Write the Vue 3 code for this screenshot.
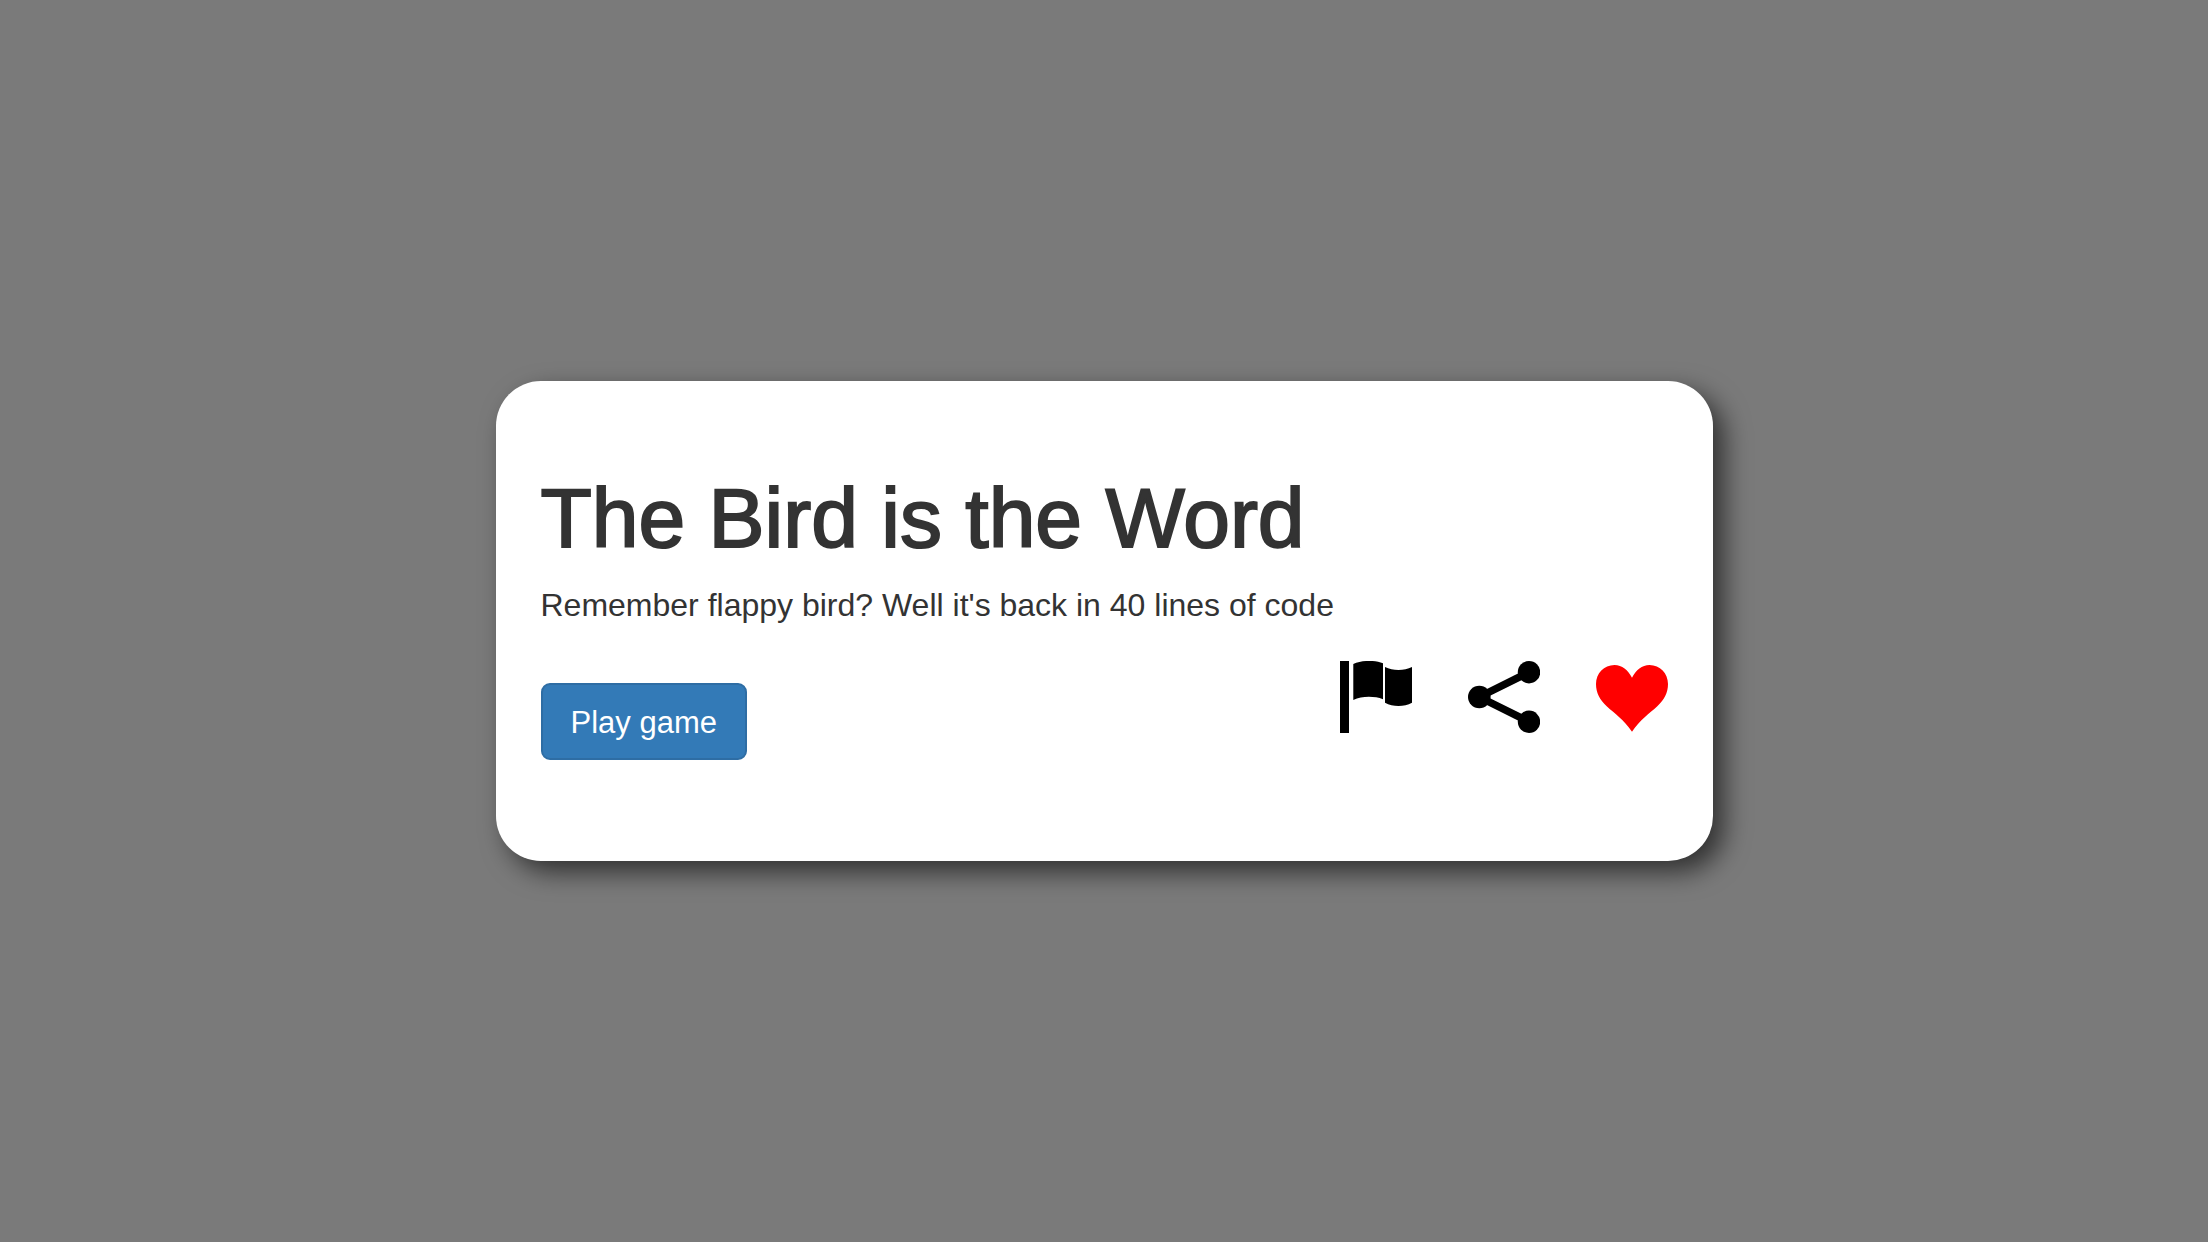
<script setup>
const title = 'The Bird is the Word'
const summary = "Remember flappy bird? Well it's back in 40 lines of code"
</script>

<template>
  <main class="page">
    <article class="card">
      <h1 class="title">{{ title }}</h1>
      <p class="summary">{{ summary }}</p>
      <div class="actions">
        <button type="button" class="play">Play game</button>
        <div class="icons">
          <button type="button" class="icon" aria-label="Flag">
            <svg viewBox="0 0 72 72" aria-hidden="true">
              <path d="M0 0H9V72H0Z" />
              <path d="M13.3 3C22 -1 35 -1 43 2.2V38.2C34 34.9 22 34.9 13.3 39Z" />
              <path d="M45 6C53 10 64 10 72 6V41.7C64 46.1 53 46.1 45 41.7Z" />
            </svg>
          </button>
          <button type="button" class="icon" aria-label="Share">
            <svg viewBox="0 0 72 72" aria-hidden="true">
              <path d="M61 11.2L11.3 36L61 60.8" fill="none" stroke="currentColor" stroke-width="7.5" />
              <circle cx="11.3" cy="36" r="11.3" />
              <circle cx="61" cy="11.2" r="11.2" />
              <circle cx="61" cy="60.8" r="11.2" />
            </svg>
          </button>
          <button type="button" class="icon liked" aria-label="Like" aria-pressed="true">
            <svg viewBox="0 0 72 72" aria-hidden="true">
              <path d="M36 16.7C32 9 26 4 18.5 4C8 4 0 12.5 0 23C0 32 3.8 38.8 10.7 45.3C18.5 52.5 28 59 36 70.7C44 59 53.5 52.5 61.3 45.3C68.2 38.8 72 32 72 23C72 12.5 64 4 53.5 4C46 4 40 9 36 16.7Z" />
            </svg>
          </button>
        </div>
      </div>
    </article>
  </main>
</template>

<style>
body {
  margin: 0;
  background: #7a7a7a;
}
</style>

<style scoped>
.page {
  box-sizing: border-box;
  display: flex;
  align-items: center;
  justify-content: center;
  min-height: 100vh;
  padding: 24px;
  font-family: "Liberation Sans", Helvetica, Arial, sans-serif;
  color: #333;
}

.card {
  box-sizing: border-box;
  width: 100%;
  max-width: 1217px;
  padding: 92px 45px 101px;
  border-radius: 45px;
  background: #fff;
  box-shadow: 11px 11px 26px rgba(0, 0, 0, 0.6);
}

.title {
  margin: 0 0 20px;
  font-size: 84px;
  font-weight: 400;
  line-height: 90px;
  -webkit-text-stroke: 2px #333;
}

.summary {
  margin: 0 0 33px;
  font-size: 32px;
  line-height: 45px;
}

.actions {
  display: flex;
  justify-content: space-between;
  align-items: flex-end;
  min-height: 99px;
}

.play {
  padding: 15px 28px 13px;
  border: 2px solid #2e6da4;
  border-radius: 9px;
  background: #337ab7;
  color: #fff;
  font-family: inherit;
  font-size: 31px;
  line-height: 45px;
}

.icons {
  display: flex;
  align-self: flex-start;
  gap: 56px;
}

.icon {
  width: 72px;
  height: 72px;
  padding: 0;
  border: 0;
  background: none;
  color: #000;
}

.icon svg {
  display: block;
  width: 100%;
  height: 100%;
  fill: currentColor;
}

.liked {
  color: #f00;
}
</style>
